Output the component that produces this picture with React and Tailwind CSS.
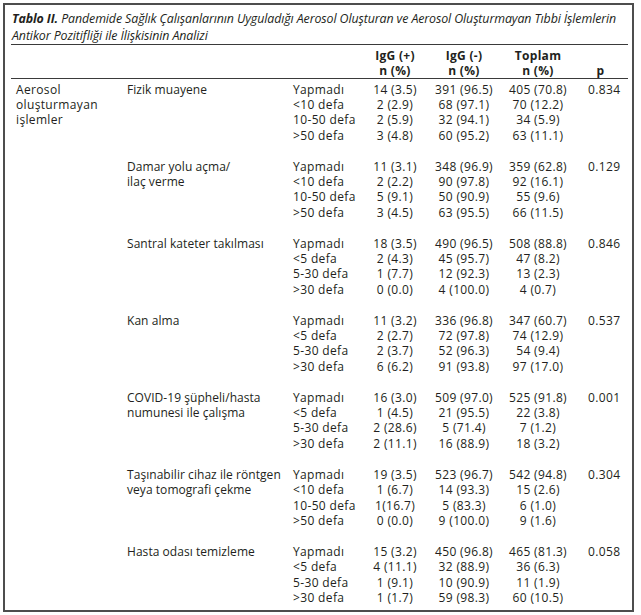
import React from "react";

const groups = [
  {
    name: ["Fizik muayene"],
    rows: [
      ["Yapmadı", "14 (3.5)", "391 (96.5)", "405 (70.8)", "0.834"],
      ["<10 defa", "2 (2.9)", "68 (97.1)", "70 (12.2)"],
      ["10-50 defa", "2 (5.9)", "32 (94.1)", "34 (5.9)"],
      [">50 defa", "3 (4.8)", "60 (95.2)", "63 (11.1)"],
    ],
  },
  {
    name: ["Damar yolu açma/", "ilaç verme"],
    rows: [
      ["Yapmadı", "11 (3.1)", "348 (96.9)", "359 (62.8)", "0.129"],
      ["<10 defa", "2 (2.2)", "90 (97.8)", "92 (16.1)"],
      ["10-50 defa", "5 (9.1)", "50 (90.9)", "55 (9.6)"],
      [">50 defa", "3 (4.5)", "63 (95.5)", "66 (11.5)"],
    ],
  },
  {
    name: ["Santral kateter takılması"],
    rows: [
      ["Yapmadı", "18 (3.5)", "490 (96.5)", "508 (88.8)", "0.846"],
      ["<5 defa", "2 (4.3)", "45 (95.7)", "47 (8.2)"],
      ["5-30 defa", "1 (7.7)", "12 (92.3)", "13 (2.3)"],
      [">30 defa", "0 (0.0)", "4 (100.0)", "4 (0.7)"],
    ],
  },
  {
    name: ["Kan alma"],
    rows: [
      ["Yapmadı", "11 (3.2)", "336 (96.8)", "347 (60.7)", "0.537"],
      ["<5 defa", "2 (2.7)", "72 (97.8)", "74 (12.9)"],
      ["5-30 defa", "2 (3.7)", "52 (96.3)", "54 (9.4)"],
      [">30 defa", "6 (6.2)", "91 (93.8)", "97 (17.0)"],
    ],
  },
  {
    name: ["COVID-19 şüpheli/hasta", "numunesi ile çalışma"],
    rows: [
      ["Yapmadı", "16 (3.0)", "509 (97.0)", "525 (91.8)", "0.001"],
      ["<5 defa", "1 (4.5)", "21 (95.5)", "22 (3.8)"],
      ["5-30 defa", "2 (28.6)", "5 (71.4)", "7 (1.2)"],
      [">30 defa", "2 (11.1)", "16 (88.9)", "18 (3.2)"],
    ],
  },
  {
    name: ["Taşınabilir cihaz ile röntgen", "veya tomografi çekme"],
    rows: [
      ["Yapmadı", "19 (3.5)", "523 (96.7)", "542 (94.8)", "0.304"],
      ["<10 defa", "1 (6.7)", "14 (93.3)", "15 (2.6)"],
      ["10-50 defa", "1(16.7)", "5 (83.3)", "6 (1.0)"],
      [">50 defa", "0 (0.0)", "9 (100.0)", "9 (1.6)"],
    ],
  },
  {
    name: ["Hasta odası temizleme"],
    rows: [
      ["Yapmadı", "15 (3.2)", "450 (96.8)", "465 (81.3)", "0.058"],
      ["<5 defa", "4 (11.1)", "32 (88.9)", "36 (6.3)"],
      ["5-30 defa", "1 (9.1)", "10 (90.9)", "11 (1.9)"],
      [">30 defa", "1 (1.7)", "59 (98.3)", "60 (10.5)"],
    ],
  },
];

const App = () => {
  return (
    <div className="min-h-screen bg-white pt-[3px] pl-[3px]">
      <div className="w-[631px] h-[609px] border-2 border-[#4d4d4d] pl-[6px] pr-[4px] text-[#231f20] font-['Open_Sans',sans-serif]">
        {/* TITLE */}
        <div className="pt-[4.5px] pl-[1px] text-[12.4px] leading-[17px] italic tracking-[-0.1px] whitespace-nowrap border-b border-[#3a3a3a]">
          <span className="font-bold">Tablo II.</span> Pandemide Sağlık
          Çalışanlarının Uyguladığı Aerosol Oluşturan ve Aerosol Oluşturmayan
          Tıbbi İşlemlerin
          <br />
          Antikor Pozitifliği ile İlişkisinin Analizi
        </div>

        {/* HEADER */}
        <div className="grid grid-cols-[116px_166px_72px_60px_78px_70px_55px] pt-[3px] text-[12px] leading-[15.4px] tracking-[0.3px] font-bold border-b border-[#3a3a3a]">
          <div />
          <div />
          <div />
          <div className="flex flex-col items-center">
            <span>IgG (+)</span>
            <span>n (%)</span>
          </div>
          <div className="flex flex-col items-center">
            <span>IgG (-)</span>
            <span>n (%)</span>
          </div>
          <div className="flex flex-col items-center">
            <span>Toplam</span>
            <span>n (%)</span>
          </div>
          <div className="flex items-end justify-center">p</div>
        </div>

        {/* BODY */}
        <div className="flex pt-[2.3px] text-[12px] leading-[15.4px] tracking-[0.35px]">
          <div className="w-[116px] pl-[5px]">
            Aerosol
            <br />
            oluşturmayan
            <br />
            işlemler
          </div>
          <div className="flex flex-col">
            {groups.map((g, i) => (
              <div key={i} className="flex pb-[15.4px]">
                <div className="w-[166px] whitespace-nowrap tracking-[0.05px]">
                  {g.name.map((n, j) => (
                    <div key={j}>{n}</div>
                  ))}
                </div>
                <div className="flex flex-col">
                  {g.rows.map((r, k) => (
                    <div
                      key={k}
                      className="grid grid-cols-[72px_60px_78px_70px_55px] whitespace-nowrap"
                    >
                      <div>{r[0]}</div>
                      <div className="text-center">{r[1]}</div>
                      <div className="text-center">{r[2]}</div>
                      <div className="text-center">{r[3]}</div>
                      <div className="pl-[15px]">{r[4] || ""}</div>
                    </div>
                  ))}
                </div>
              </div>
            ))}
          </div>
        </div>
      </div>
    </div>
  );
};

export default App;
